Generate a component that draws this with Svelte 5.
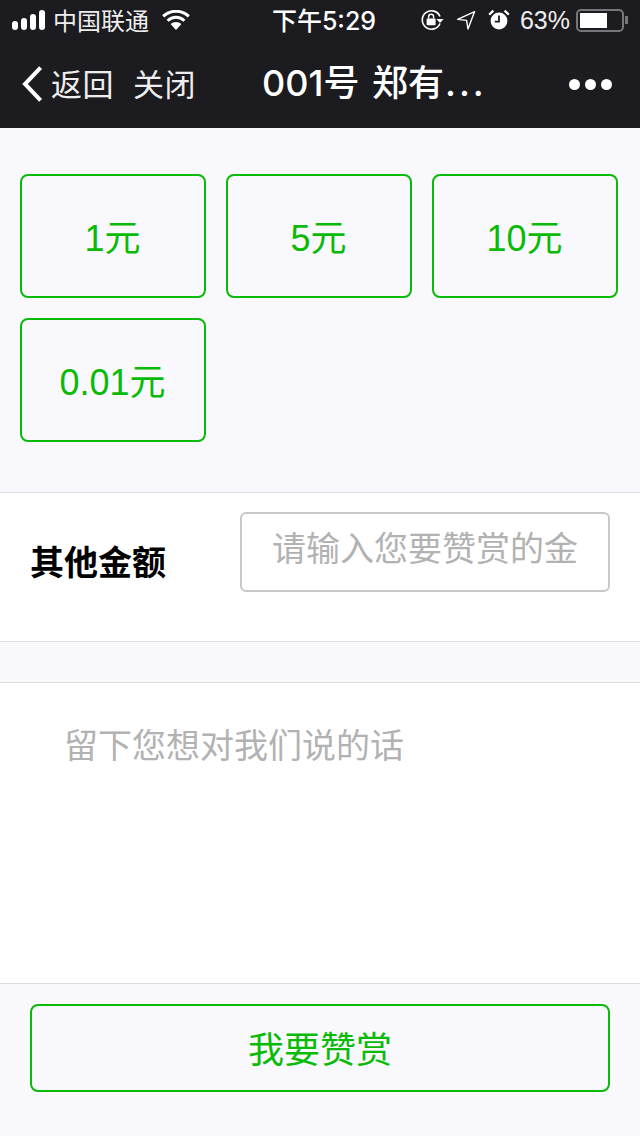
<script>
  const amounts = ['1元', '5元', '10元', '0.01元'];
</script>

<div class="page">
  <header class="top">
    <div class="status">
      <div class="status-left">
        <div class="signal"><i></i><i></i><i></i><i></i></div>
        <span class="carrier">中国联通</span>
        <svg class="wifi" width="28" height="20" viewBox="0 0 28 20">
          <path d="M14 20 L8.6 14 A8 8 0 0 1 19.4 14 Z" fill="#fff"/>
          <path d="M5.6 10.8 A12 12 0 0 1 22.4 10.8" fill="none" stroke="#fff" stroke-width="3"/>
          <path d="M1.2 6.4 A18.5 18.5 0 0 1 26.8 6.4" fill="none" stroke="#fff" stroke-width="3"/>
        </svg>
      </div>
      <span class="clock">下午5:29</span>
      <div class="status-right">
        <svg class="lock" width="24" height="22" viewBox="0 0 24 22">
          <path d="M20 7.5 A9.2 9.2 0 1 0 20 14.5" fill="none" stroke="#fff" stroke-width="1.6"/>
          <path d="M16.4 10 L23.6 10 L20 14 Z" fill="#fff"/>
          <rect x="6.6" y="9.6" width="9" height="6.6" rx="1" fill="#fff"/>
          <path d="M8.6 9.6 V7.8 A2.5 2.5 0 0 1 13.6 7.8 V9.6" fill="none" stroke="#fff" stroke-width="1.4"/>
        </svg>
        <svg class="arrow" width="20" height="20" viewBox="0 0 20 20">
          <path d="M18.6 1.6 L1.6 9.4 L10.6 10.4 L12 19 Z" fill="none" stroke="#fff" stroke-width="1.4" stroke-linejoin="round"/>
        </svg>
        <svg class="alarm" width="22" height="22" viewBox="0 0 22 22">
          <circle cx="11" cy="12" r="8.4" fill="#fff"/>
          <path d="M11 6.4 V12.6 H6.8" fill="none" stroke="#1b1b20" stroke-width="1.8"/>
          <path d="M1.2 5.6 L5.4 1.6 M20.8 5.6 L16.6 1.6" stroke="#fff" stroke-width="2.2"/>
        </svg>
        <span class="percent">63%</span>
        <div class="battery"><div class="level"></div></div>
        <div class="nub"></div>
      </div>
    </div>
    <nav class="nav">
      <div class="nav-left">
        <svg class="back" width="22" height="36" viewBox="0 0 22 36">
          <path d="M18.6 1.6 L3 18 L18.6 34.4" fill="none" stroke="#fff" stroke-width="4"/>
        </svg>
        <span class="back-label">返回</span>
        <span class="close">关闭</span>
      </div>
      <div class="title">001号 郑有<span class="dots">...</span></div>
      <div class="more"><i></i><i></i><i></i></div>
    </nav>
  </header>

  <section class="amounts">
    {#each amounts as a}
      <button class="amount"><span>{a}</span></button>
    {/each}
  </section>

  <section class="other">
    <span class="other-label">其他金额</span>
    <div class="other-input">请输入您要赞赏的金</div>
  </section>

  <section class="message">留下您想对我们说的话</section>

  <footer class="foot">
    <button class="submit">我要赞赏</button>
  </footer>
</div>

<style>
  :global(body) {
    margin: 0;
    background: #f9f8fd;
  }

  .page {
    width: 640px;
    height: 1136px;
    overflow: hidden;
    background: #f9f8fd;
    font-family: "Liberation Sans", "Noto Sans CJK SC", sans-serif;
  }

  .top {
    height: 128px;
    background: #1b1b20;
    color: #fff;
  }

  .status {
    height: 40px;
    display: grid;
    grid-template-columns: 1fr auto 1fr;
    align-items: center;
    padding: 0 12px 0 12px;
    font-size: 24px;
  }

  .status-left {
    display: flex;
    align-items: center;
  }

  .signal {
    display: flex;
    align-items: flex-end;
    gap: 3px;
    width: 33px;
  }

  .signal i {
    width: 6px;
    border-radius: 3px;
    background: #fff;
  }

  .signal i:nth-child(1) { height: 9px; }
  .signal i:nth-child(2) { height: 12px; }
  .signal i:nth-child(3) { height: 16px; }
  .signal i:nth-child(4) { height: 20px; }

  .carrier {
    margin-left: 8px;
    color: #eee;
    transform: translateY(-1px);
  }

  .wifi {
    margin-left: 13px;
  }

  .clock {
    font-family: Inter, "Noto Sans CJK SC", sans-serif;
    font-size: 25px;
    font-weight: 500;
    margin-left: 8px;
    transform: translateY(-1px);
  }

  .status-right {
    display: flex;
    align-items: center;
    justify-content: flex-end;
  }

  .arrow { margin-left: 12px; }
  .alarm { margin-left: 12px; }

  .percent {
    margin-left: 10px;
    font-size: 25px;
    color: #eee;
  }

  .battery {
    margin-left: 6px;
    width: 48px;
    height: 23px;
    box-sizing: border-box;
    border: 2px solid #77777b;
    border-radius: 5px;
    padding: 2px;
  }

  .level {
    width: 27px;
    height: 15px;
    background: #fff;
  }

  .nub {
    width: 3px;
    height: 8px;
    margin-left: 1px;
    background: #77777b;
  }

  .nav {
    height: 88px;
    position: relative;
    display: flex;
    align-items: center;
    justify-content: space-between;
    padding: 0 28px 0 22px;
  }

  .nav-left {
    display: flex;
    align-items: center;
    font-size: 31px;
    letter-spacing: 0.5px;
    color: #eee;
  }

  .back-label {
    margin-left: 7px;
    transform: translateY(-2px);
  }

  .close {
    margin-left: 19px;
    transform: translateY(-2px);
  }

  .title {
    position: absolute;
    left: 262px;
    top: 21px;
    font-family: Inter, "Noto Sans CJK SC", sans-serif;
    font-size: 36px;
    font-weight: 500;
    line-height: 44px;
    word-spacing: 3px;
    white-space: nowrap;
  }

  .dots {
    letter-spacing: 3px;
    margin-left: 1px;
  }

  .more {
    display: flex;
    gap: 5px;
  }

  .more i {
    width: 11px;
    height: 11px;
    border-radius: 50%;
    background: #fff;
  }

  .amounts {
    height: 365px;
    box-sizing: border-box;
    padding: 46px 20px 0;
    display: grid;
    grid-template-columns: repeat(3, 186px);
    grid-auto-rows: 124px;
    gap: 20px;
    align-content: start;
    border-bottom: 1px solid #dcdcdc;
  }

  .amount {
    border: 2px solid #09bb07;
    border-radius: 8px;
    background: transparent;
    color: #09bb07;
    font: inherit;
    font-size: 36px;
    padding: 0 1px 3px 0;
  }

  .other {
    height: 149px;
    box-sizing: border-box;
    background: #fff;
    display: flex;
    align-items: flex-start;
    justify-content: space-between;
    padding: 19px 30px 0 30px;
    border-bottom: 1px solid #dcdcdc;
  }

  .other-label {
    margin-top: 24px;
    font-size: 34px;
    font-weight: 700;
    color: #000;
  }

  .other-input {
    width: 370px;
    height: 80px;
    box-sizing: border-box;
    border: 2px solid #c8c8c8;
    border-radius: 6px;
    padding: 8px 0 0 30px;
    font-size: 34px;
    color: #b2b2b2;
    white-space: nowrap;
    overflow: hidden;
  }

  .message {
    margin-top: 40px;
    height: 302px;
    box-sizing: border-box;
    background: #fff;
    border-top: 1px solid #dcdcdc;
    border-bottom: 1px solid #dcdcdc;
    padding: 36px 0 0 64px;
    font-size: 34px;
    color: #b2b2b2;
  }

  .foot {
    padding: 20px 30px 0;
  }

  .submit {
    width: 580px;
    height: 88px;
    border: 2px solid #09bb07;
    border-radius: 8px;
    background: transparent;
    color: #09bb07;
    font: inherit;
    font-size: 36px;
    padding: 0 0 2px;
  }
</style>
